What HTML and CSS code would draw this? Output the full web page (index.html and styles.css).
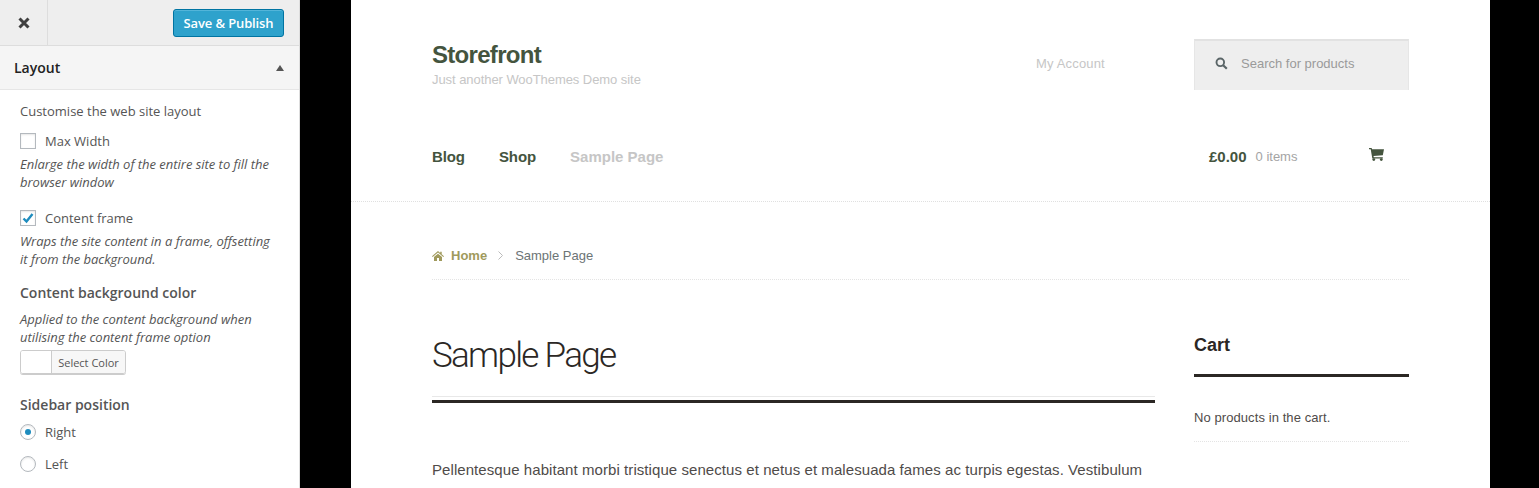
FILE: index.html
```html
<!DOCTYPE html>
<html lang="en">
<head>
    <meta charset="UTF-8">
    <title>Customize: Storefront</title>
    <link rel="stylesheet" href="styles.css">
</head>
<body>
    <div class="customizer">
        <!-- panel on the left -->
        <aside class="panel">
            <div class="panel-top">
                <a class="close-btn" href="#">
                    <svg width="14" height="14" viewBox="0 0 14 14"><path d="M2.500 2.500l9 9M11.500 2.500l-9 9" stroke="#3f3f3f" stroke-width="3" fill="none"/></svg>
                </a>
                <button class="save-btn" type="button">Save &amp; Publish</button>
            </div>
            <div class="section-head">
                <h3>Layout</h3>
                <span class="arrow-up"></span>
            </div>
            <div class="section-body">
                <p class="intro">Customise the web site layout</p>

                <label class="check-row"><span class="check"></span>Max Width</label>
                <p class="desc desc-check">Enlarge the width of the entire site to fill the browser window</p>

                <label class="check-row check-row-2">
                    <span class="check">
                        <svg width="14" height="12" viewBox="0 0 14 12"><path d="M2.500 6.500l3 3 6-7.500" stroke="#1e8cbe" stroke-width="2.400" fill="none"/></svg>
                    </span>Content frame
                </label>
                <p class="desc desc-check">Wraps the site content in a frame, offsetting it from the background.</p>

                <h4 class="control-title">Content background color</h4>
                <p class="desc desc-color">Applied to the content background when utilising the content frame option</p>
                <div class="color-btn"><span class="swatch"></span><span class="color-label">Select Color</span></div>

                <h4 class="control-title title-sidebar">Sidebar position</h4>
                <label class="radio-row"><span class="radio radio-on"></span>Right</label>
                <label class="radio-row"><span class="radio"></span>Left</label>
            </div>
        </aside>

        <!-- site preview -->
        <div class="preview">
            <div class="site">
                <header class="site-header">
                    <div class="wrap">
                        <div class="header-top">
                            <div class="branding">
                                <h1>Storefront</h1>
                                <p>Just another WooThemes Demo site</p>
                            </div>
                            <a class="account" href="#">My Account</a>
                            <div class="search">
                                <svg width="13" height="13" viewBox="0 0 13 13"><circle cx="5.300" cy="5.300" r="3.800" stroke="#5a6567" stroke-width="1.900" fill="none"/><path d="M8.200 8.200l3.600 3.600" stroke="#5a6567" stroke-width="2.200"/></svg>
                                <span>Search for products</span>
                            </div>
                        </div>
                        <div class="header-nav">
                            <nav class="main-nav">
                                <a href="#">Blog</a>
                                <a href="#">Shop</a>
                                <a class="current" href="#">Sample Page</a>
                            </nav>
                            <div class="mini-cart">
                                <span class="amount">£0.00</span>
                                <span class="items">0 items</span>
                                <svg class="cart-icon" width="15" height="13" viewBox="0 0 15 13"><path d="M0 0h2.600l.5 1.300H15l-1.200 5.900-9.300.9.300 1.100h9v1.300H3.300L1.700 1.300H0z" fill="#44543e"/><circle cx="4.800" cy="11.600" r="1.400" fill="#44543e"/><circle cx="12.300" cy="11.600" r="1.400" fill="#44543e"/></svg>
                            </div>
                        </div>
                    </div>
                </header>

                <div class="wrap">
                    <div class="crumbs">
                        <svg width="12" height="10" viewBox="0 0 12 10"><path d="M6 0l2.200 1.900V.7h1.500v2.500L12 5.200l-.7.700L6 1.500.7 5.900 0 5.200zM2 6l4-3.300L10 6v4H7V7H5v3H2z" fill="#a09a5c"/></svg>
                        <a href="#">Home</a>
                        <svg class="crumb-sep" width="5" height="9" viewBox="0 0 5 9"><path d="M.5.500l4 4-4 4" stroke="#bbb" fill="none"/></svg>
                        <span>Sample Page</span>
                    </div>

                    <div class="columns">
                        <main class="content">
                            <div class="entry-header">
                                <h2>Sample Page</h2>
                            </div>
                            <p>Pellentesque habitant morbi tristique senectus et netus et malesuada fames ac turpis egestas. Vestibulum</p>
                        </main>
                        <div class="widget">
                            <h3>Cart</h3>
                            <p>No products in the cart.</p>
                        </div>
                    </div>
                </div>
            </div>
        </div>
    </div>
</body>
</html>
```

FILE: styles.css
```css
html, body {
    margin: 0;
    padding: 0;
    height: 488px;
    overflow: hidden;
}

.customizer {
    display: flex;
    height: 488px;
    overflow: hidden;
    background-color: #000;
}

p, h1, h2, h3, h4 {
    margin: 0;
}

/* left panel */
.panel {
    width: 300px;
    flex-shrink: 0;
    box-sizing: border-box;
    background-color: #fff;
    border-right: 1px solid #ddd;
    font-family: 'Open Sans', sans-serif;
    font-size: 13px;
    color: #555;
}

.panel-top {
    display: flex;
    justify-content: space-between;
    align-items: center;
    height: 46px;
    box-sizing: border-box;
    padding-right: 15px;
    background-color: #eee;
    border-bottom: 1px solid #ddd;
}

.close-btn {
    display: flex;
    align-items: center;
    justify-content: center;
    width: 47px;
    height: 45px;
    border-right: 1px solid #ddd;
}

.save-btn {
    width: 111px;
    height: 28px;
    padding: 0;
    background-color: #2ea2cc;
    border: 1px solid #0074a2;
    border-radius: 3px;
    color: #fff;
    font-family: 'Open Sans', sans-serif;
    font-size: 13px;
    font-weight: 600;
    letter-spacing: -0.01em;
    box-shadow: inset 0 1px 0 rgba(120,200,230,0.5);
}

.section-head {
    display: flex;
    justify-content: space-between;
    align-items: center;
    height: 44px;
    box-sizing: border-box;
    padding: 0 15px 0 14px;
    background-color: #f5f5f5;
    border-bottom: 1px solid #e6e6e6;
}

.section-head h3 {
    font-size: 14px;
    font-weight: 600;
    color: #222;
}

.arrow-up {
    width: 0;
    height: 0;
    border-left: 4px solid transparent;
    border-right: 4px solid transparent;
    border-bottom: 6px solid #555;
}

.section-body {
    padding: 11px 20px 0;
}

.intro {
    line-height: 20px;
}

.check-row, .radio-row {
    display: flex;
    align-items: center;
    height: 20px;
}

.check-row {
    margin-top: 10px;
}

.check-row-2 {
    margin-top: 17px;
}

.check {
    display: flex;
    align-items: center;
    justify-content: center;
    box-sizing: border-box;
    width: 16px;
    height: 16px;
    margin-right: 9px;
    background-color: #fff;
    border: 1px solid #b4b9be;
    box-shadow: inset 0 1px 2px rgba(0,0,0,0.1);
}

.desc {
    font-size: 13px;
    font-style: italic;
    line-height: 18px;
    letter-spacing: -0.02px;
}

.desc-check {
    margin-top: 4px;
}

.control-title {
    margin-top: 15px;
    font-size: 14px;
    font-weight: 600;
    line-height: 20px;
    color: #555;
}

.desc-color {
    margin-top: 7px;
}

.color-btn {
    display: flex;
    width: 106px;
    height: 24px;
    margin-top: 4px;
    box-sizing: border-box;
    border: 1px solid #ccc;
    border-radius: 3px;
    box-shadow: 0 1px 0 #ccc;
    overflow: hidden;
}

.swatch {
    width: 30px;
    background-color: #fff;
    border-right: 1px solid #ccc;
}

.color-label {
    flex: 1;
    background-color: #f7f7f7;
    font-size: 11px;
    line-height: 24px;
    text-align: center;
}

.title-sidebar {
    margin-top: 21px;
}

.radio-row {
    margin-top: 12px;
}

.title-sidebar + .radio-row {
    margin-top: 7px;
}

.radio {
    display: flex;
    align-items: center;
    justify-content: center;
    box-sizing: border-box;
    width: 16px;
    height: 16px;
    margin-right: 9px;
    background-color: #fff;
    border: 1px solid #b4b9be;
    border-radius: 50%;
    box-shadow: inset 0 1px 2px rgba(0,0,0,0.1);
}

.radio-on::before {
    content: "";
    width: 6px;
    height: 6px;
    background-color: #1e8cbe;
    border-radius: 50%;
}

/* preview */
.preview {
    flex: 1;
    padding: 0 49px 0 51px;
}

.site {
    height: 488px;
    overflow: hidden;
    background-color: #fff;
    font-family: 'Liberation Sans', Arial, sans-serif;
    color: #60646c;
}

.wrap {
    width: 977px;
    margin-left: 81px;
}

.site-header {
    height: 202px;
    box-sizing: border-box;
    border-bottom: 1px dotted #e0e0e0;
}

.header-top {
    display: flex;
    align-items: flex-start;
    height: 117px;
    padding-top: 39px;
    box-sizing: border-box;
}

.branding {
    width: 604px;
    padding-top: 1px;
}

.branding h1 {
    font-size: 24px;
    font-weight: bold;
    line-height: 30px;
    letter-spacing: -0.7px;
    color: #44543e;
}

.branding p {
    margin-top: 2px;
    font-size: 13px;
    line-height: 16px;
    letter-spacing: -0.06px;
    color: #c6c6c6;
}

.account {
    width: 158px;
    padding-top: 17px;
    font-size: 13px;
    line-height: 16px;
    letter-spacing: 0.17px;
    color: #c6c6c6;
    text-decoration: none;
}

.search {
    display: flex;
    align-items: center;
    width: 215px;
    height: 51px;
    box-sizing: border-box;
    padding: 0 0 5px 20px;
    background-color: #eee;
    border-top: 2px solid #e2e2e2;
    border-left: 1px solid #e6e6e6;
    border-right: 1px solid #e6e6e6;
    font-size: 13px;
    color: #9a9a9a;
}

.search span {
    margin-left: 13px;
}

.header-nav {
    display: flex;
    justify-content: space-between;
}

.main-nav {
    display: flex;
    gap: 34px;
    padding-top: 31px;
}

.main-nav a {
    font-size: 15px;
    font-weight: bold;
    line-height: 18px;
    letter-spacing: -0.1px;
    color: #44543e;
    text-decoration: none;
}

.main-nav a.current {
    color: #c6c6c6;
    letter-spacing: 0;
}

.mini-cart {
    display: flex;
    align-items: flex-start;
    width: 215px;
    box-sizing: border-box;
    padding: 31px 0 0 15px;
    line-height: 18px;
}

.amount {
    font-size: 15px;
    font-weight: bold;
    color: #44543e;
}

.items {
    margin-left: 9px;
    font-size: 13px;
    color: #a4a4a4;
}

.cart-icon {
    margin: 0 0 0 72px;
}

.crumbs {
    display: flex;
    align-items: center;
    height: 78px;
    padding-top: 30px;
    box-sizing: border-box;
    border-bottom: 1px dotted #e4e4e4;
    font-size: 13px;
    color: #6c7476;
}

.crumbs a {
    margin-left: 7px;
    font-weight: bold;
    color: #a09a5c;
    text-decoration: none;
}

.crumb-sep {
    margin: 0 12px 0 11px;
}

.columns {
    display: flex;
    justify-content: space-between;
}

.content {
    width: 723px;
    padding-top: 54px;
}

.entry-header {
    padding-bottom: 3px;
    border-bottom: 3px solid #2b2724;
}

.content h2 {
    height: 63px;
    box-sizing: border-box;
    border-bottom: 1px solid #e8e8e8;
    font-family: Roboto, 'Liberation Sans', sans-serif;
    font-size: 35px;
    font-weight: 300;
    line-height: 44px;
    letter-spacing: -1.7px;
    color: #2b2724;
}

.content p {
    margin-top: 57px;
    font-size: 15px;
    line-height: 20px;
    letter-spacing: 0.07px;
    white-space: nowrap;
    color: #4f4b49;
}

.widget {
    width: 215px;
    padding-top: 54px;
}

.widget h3 {
    height: 43px;
    box-sizing: border-box;
    border-bottom: 3px solid #2b2724;
    font-size: 18px;
    font-weight: bold;
    line-height: 22px;
    color: #2b2724;
}

.widget p {
    padding: 33px 0 15px;
    border-bottom: 1px dotted #e4e4e4;
    font-size: 13px;
    line-height: 16px;
    letter-spacing: 0.08px;
    color: #4f4b49;
}
```
